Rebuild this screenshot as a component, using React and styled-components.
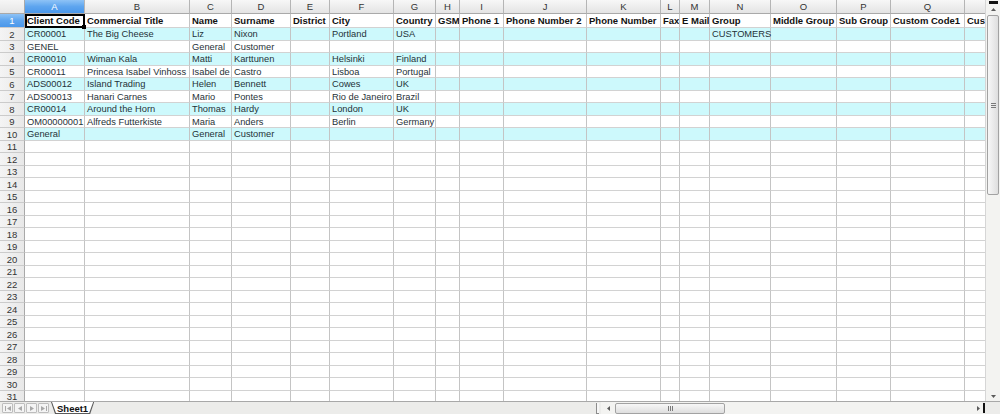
import React from "react";
import styled, { createGlobalStyle, css } from "styled-components";

const GlobalStyle = createGlobalStyle`
  html, body {
    margin: 0;
    padding: 0;
    background: #ffffff;
  }
  body {
    font-family: "Liberation Sans", Arial, sans-serif;
  }
  * {
    box-sizing: border-box;
  }
`;

// column letters and widths
const columns = [
  ["A", 60], ["B", 105], ["C", 42], ["D", 59], ["E", 39], ["F", 64],
  ["G", 42], ["H", 24], ["I", 44], ["J", 83], ["K", 74], ["L", 19],
  ["M", 30], ["N", 61], ["O", 66], ["P", 54], ["Q", 74], ["R", 74],
];
const gridTemplate = `25px ${columns.map(([, w]) => `${w}px`).join(" ")}`;

const titles = [
  "Client Code", "Commercial Title", "Name", "Surname", "District", "City",
  "Country", "GSM", "Phone 1", "Phone Number 2", "Phone Number", "Fax",
  "E Mail", "Group", "Middle Group", "Sub Group", "Custom Code1", "Custom Code2",
];

const customers = [
  { A: "CR00001", B: "The Big Cheese", C: "Liz", D: "Nixon", F: "Portland", G: "USA", N: "CUSTOMERS" },
  { A: "GENEL", C: "General", D: "Customer" },
  { A: "CR00010", B: "Wiman Kala", C: "Matti", D: "Karttunen", F: "Helsinki", G: "Finland" },
  { A: "CR00011", B: "Princesa Isabel Vinhoss", C: "Isabel de", D: "Castro", F: "Lisboa", G: "Portugal" },
  { A: "ADS00012", B: "Island Trading", C: "Helen", D: "Bennett", F: "Cowes", G: "UK" },
  { A: "ADS00013", B: "Hanari Carnes", C: "Mario", D: "Pontes", F: "Rio de Janeiro", G: "Brazil" },
  { A: "CR00014", B: "Around the Horn", C: "Thomas", D: "Hardy", F: "London", G: "UK" },
  { A: "OM00000001", B: "Alfreds Futterkiste", C: "Maria", D: "Anders", F: "Berlin", G: "Germany" },
  { A: "General", C: "General", D: "Customer" },
];

const TOTAL_ROWS = 31;

const rowHeight = (n) => (n === 1 ? 14 : n % 2 === 0 ? 13 : 12);

const App = () => {
  const rows = [];
  for (let n = 1; n <= TOTAL_ROWS; n++) {
    const data = n >= 2 ? customers[n - 2] : null;
    const valueAt = (i) =>
      n === 1 ? titles[i] || "" : data && columns[i] ? data[columns[i][0]] || "" : "";
    rows.push(
      <Row key={n} $h={rowHeight(n)} $striped={!!data && n % 2 === 0}>
        <RowHead $selected={n === 1}>{n}</RowHead>
        {columns.map(([id], i) => (
          // text spills into the next cell only while that one is empty
          <Cell
            key={id}
            $active={n === 1 && i === 0}
            $bold={n === 1}
            $clip={valueAt(i + 1) !== ""}
          >
            {valueAt(i)}
          </Cell>
        ))}
      </Row>
    );
  }

  return (
    <>
      <GlobalStyle />
      <Window>
        <Main>
          <Sheet>
            <Row $h={14}>
              <Corner />
              {columns.map(([id]) => (
                <ColHead key={id} $selected={id === "A"}>
                  {id}
                </ColHead>
              ))}
            </Row>
            {rows}
          </Sheet>
          <VScroll>
            <SplitMark />
            <ArrowBox>
              <svg width="5" height="3" viewBox="0 0 5 3">
                <polygon points="0,3 2.5,0 5,3" fill="#5a5a5a" />
              </svg>
            </ArrowBox>
            <VThumb>
              <Grip $vertical />
            </VThumb>
            <Track />
            <ArrowBox>
              <svg width="5" height="3" viewBox="0 0 5 3">
                <polygon points="0,0 5,0 2.5,3" fill="#5a5a5a" />
              </svg>
            </ArrowBox>
          </VScroll>
        </Main>

        <BottomBar>
          <NavGroup>
            <NavButton>
              <svg width="6" height="5" viewBox="0 0 6 5">
                <rect x="0" y="0" width="1" height="5" fill="#a8a8a8" />
                <polygon points="6,0 6,5 2,2.5" fill="#a8a8a8" />
              </svg>
            </NavButton>
            <NavButton>
              <svg width="4" height="5" viewBox="0 0 4 5">
                <polygon points="4,0 4,5 0,2.5" fill="#a8a8a8" />
              </svg>
            </NavButton>
            <NavButton>
              <svg width="4" height="5" viewBox="0 0 4 5">
                <polygon points="0,0 0,5 4,2.5" fill="#a8a8a8" />
              </svg>
            </NavButton>
            <NavButton>
              <svg width="6" height="5" viewBox="0 0 6 5">
                <polygon points="0,0 0,5 4,2.5" fill="#a8a8a8" />
                <rect x="5" y="0" width="1" height="5" fill="#a8a8a8" />
              </svg>
            </NavButton>
          </NavGroup>
          <SheetTab>
            <span>Sheet1</span>
          </SheetTab>
          <TabFiller />
          <Splitter />
          <HScroll>
            <ArrowBox $horizontal>
              <svg width="3" height="5" viewBox="0 0 3 5">
                <polygon points="3,0 3,5 0,2.5" fill="#5a5a5a" />
              </svg>
            </ArrowBox>
            <HThumb>
              <Grip />
            </HThumb>
            <Track />
            <ArrowBox $horizontal>
              <svg width="3" height="5" viewBox="0 0 3 5">
                <polygon points="0,0 0,5 3,2.5" fill="#5a5a5a" />
              </svg>
            </ArrowBox>
          </HScroll>
          <HSplitMark />
          <CornerBox />
        </BottomBar>
      </Window>
    </>
  );
};

export default App;

// window frame
const Window = styled.div`
  width: 1000px;
  height: 414px;
  display: flex;
  flex-direction: column;
  overflow: hidden;
  background: #ffffff;
`;

const Main = styled.div`
  flex: 1;
  display: flex;
  min-height: 0;
`;

const Sheet = styled.div`
  flex: 1;
  overflow: hidden;
  min-width: 0;
`;

// grid rows
const Row = styled.div`
  display: grid;
  grid-template-columns: ${gridTemplate};
  height: ${({ $h }) => $h}px;
  background: ${({ $striped }) => ($striped ? "#cdf9fc" : "transparent")};
`;

const headBase = css`
  display: flex;
  align-items: center;
  justify-content: center;
  font-size: 9.5px;
  color: #333333;
  overflow: hidden;
  white-space: nowrap;
`;

const selectedHead = css`
  background: linear-gradient(#8ec3f6, #5ea5ef 50%, #4a97ea);
  color: #ffffff;
`;

const Corner = styled.div`
  background: linear-gradient(#f6f6f6, #e6e6e6);
  border-right: 1px solid #a9a9a9;
  border-bottom: 1px solid #a9a9a9;
`;

const ColHead = styled.div`
  ${headBase};
  background: linear-gradient(#f7f7f7, #e4e4e4);
  border-right: 1px solid #b5b5b5;
  border-bottom: 1px solid #a9a9a9;
  ${({ $selected }) => $selected && selectedHead};
`;

const RowHead = styled.div`
  ${headBase};
  background: linear-gradient(to right, #f4f4f4, #e8e8e8);
  border-right: 1px solid #a9a9a9;
  border-bottom: 1px solid #cbcbcb;
  ${({ $selected }) => $selected && selectedHead};
`;

const Cell = styled.div`
  display: flex;
  align-items: center;
  padding: 0 2px;
  font-size: ${({ $bold }) => ($bold ? "9.5px" : "9.3px")};
  color: ${({ $bold }) => ($bold ? "#111111" : "#1f3238")};
  font-weight: ${({ $bold }) => ($bold ? 700 : 400)};
  white-space: nowrap;
  overflow: ${({ $clip }) => ($clip ? "hidden" : "visible")};
  border-right: 1px solid #c4c4c4;
  border-bottom: 1px solid #d2d2d2;
  min-width: 0;

  ${({ $active }) =>
    $active &&
    css`
      position: relative;
      overflow: visible;
      z-index: 2;
      outline: 2px solid #000000;
      outline-offset: -2px;

      &::after {
        content: "";
        position: absolute;
        right: -2px;
        bottom: -2px;
        width: 4px;
        height: 4px;
        background: #000000;
      }
    `};
`;

// vertical scrollbar
const VScroll = styled.div`
  width: 15px;
  display: flex;
  flex-direction: column;
  align-items: center;
  background: #f3f3f1;
  border-left: 1px solid #d6d6d6;
`;

const SplitMark = styled.div`
  width: 9px;
  height: 3px;
  margin-top: 1px;
  background: #111111;
`;

const ArrowBox = styled.div`
  display: flex;
  align-items: center;
  justify-content: center;
  width: ${({ $horizontal }) => ($horizontal ? "10px" : "13px")};
  height: ${({ $horizontal }) => ($horizontal ? "11px" : "10px")};
  flex-shrink: 0;
`;

const VThumb = styled.div`
  width: 12px;
  height: 180px;
  margin-top: 1px;
  display: flex;
  align-items: center;
  justify-content: center;
  border: 1px solid #a2a2a2;
  border-radius: 2px;
  background: linear-gradient(to right, #f7f7f7, #dedede);
`;

const Track = styled.div`
  flex: 1;
`;

const Grip = styled.div`
  width: 5px;
  height: 5px;
  ${({ $vertical }) =>
    $vertical
      ? css`
          background: repeating-linear-gradient(#7a7a7a 0 1px, transparent 1px 2px);
        `
      : css`
          background: repeating-linear-gradient(to right, #7a7a7a 0 1px, transparent 1px 2px);
        `};
`;

// sheet tabs and horizontal scrollbar
const BottomBar = styled.div`
  height: 13px;
  display: flex;
  align-items: stretch;
  background: #ececea;
  border-top: 1px solid #a8a8a8;
`;

const NavGroup = styled.div`
  display: flex;
  align-items: center;
  gap: 1px;
  padding-left: 2px;
`;

const NavButton = styled.div`
  width: 11px;
  height: 10px;
  display: flex;
  align-items: center;
  justify-content: center;
  border: 1px solid #bdbdbd;
  border-radius: 1px;
  background: #f4f4f4;
`;

const SheetTab = styled.div`
  position: relative;
  margin-left: 2px;
  padding: 0 6px;
  height: 12px;
  display: flex;
  align-items: center;
  font-size: 9.5px;
  font-weight: 700;
  color: #111111;
  background: #5a5a5a;
  clip-path: polygon(0 0, 100% 0, calc(100% - 4px) 100%, 4px 100%);

  &::before {
    content: "";
    position: absolute;
    inset: 0 1px 1px 1px;
    background: #ffffff;
    clip-path: polygon(0 0, 100% 0, calc(100% - 4px) 100%, 4px 100%);
  }

  span {
    position: relative;
  }
`;

const TabFiller = styled.div`
  flex: 1;
`;

const Splitter = styled.div`
  width: 3px;
  margin: 1px 2px 0 0;
  border-left: 1px solid #8c8c8c;
  border-bottom: 1px solid #8c8c8c;
  background: #f6f6f6;
`;

const HScroll = styled.div`
  width: 382px;
  display: flex;
  align-items: center;
  background: #f3f3f1;
  padding-left: 2px;
`;

const HThumb = styled.div`
  width: 110px;
  height: 11px;
  margin-left: 2px;
  display: flex;
  align-items: center;
  justify-content: center;
  border: 1px solid #a2a2a2;
  border-radius: 2px;
  background: linear-gradient(#f7f7f7, #dedede);
`;

const HSplitMark = styled.div`
  width: 2px;
  margin: 1px 0;
  background: #111111;
`;

const CornerBox = styled.div`
  width: 15px;
  background: #ececea;
`;
